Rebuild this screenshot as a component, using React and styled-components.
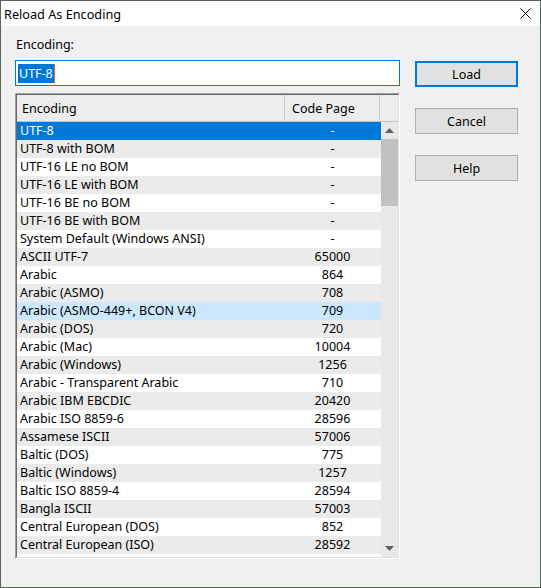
import React from 'react';
import styled, { createGlobalStyle } from 'styled-components';

const GlobalStyle = createGlobalStyle`
  html, body {
    margin: 0;
    padding: 0;
    background: #f0f0f0;
  }
  body {
    font-family: "Noto Sans", "Liberation Sans", sans-serif;
    font-size: 12.5px;
    color: #000;
  }
`;

const Window = styled.div`
  width: 541px;
  height: 588px;
  box-sizing: border-box;
  border: 1px solid #56645b;
  background: #f0f0f0;
  display: flex;
  flex-direction: column;
`;

const TitleBar = styled.div`
  height: 25px;
  background: #ffffff;
  display: flex;
  align-items: center;
  justify-content: space-between;
  padding-left: 3px;
  padding-right: 9px;
`;

const Title = styled.span`
  font-size: 12.7px;
`;

const Body = styled.div`
  display: flex;
  padding: 10px 0 0 14px;
`;

const LeftColumn = styled.div`
  width: 385px;
  display: flex;
  flex-direction: column;
`;

const RightColumn = styled.div`
  width: 103px;
  margin-left: 15px;
  padding-top: 25px;
  display: flex;
  flex-direction: column;
  gap: 21px;
`;

const Label = styled.div`
  line-height: 18px;
  padding-left: 1px;
`;

const TextBox = styled.div`
  margin-top: 6px;
  height: 26px;
  box-sizing: border-box;
  border: 1px solid #0078d7;
  background: #fff;
  display: flex;
  align-items: center;
  padding-left: 2px;
`;

const Selected = styled.span`
  background: #0078d7;
  color: #fff;
  line-height: 19px;
  padding: 0 1px;
`;

const Caret = styled.span`
  width: 1px;
  height: 19px;
  background: #f7630c;
`;

const Button = styled.div`
  height: 26px;
  box-sizing: border-box;
  background: #e1e1e1;
  border: ${p => (p.$default ? '2px solid #0078d7' : '1px solid #adadad')};
  display: flex;
  align-items: center;
  justify-content: center;
`;

const ListBox = styled.div`
  margin-top: 7px;
  height: 466px;
  box-sizing: border-box;
  border: 1px solid;
  border-color: #a0a0a0 #ffffff #ffffff #a0a0a0;
  display: flex;
`;

const ListInner = styled.div`
  flex: 1;
  border: 1px solid;
  border-color: #696969 #e3e3e3 #e3e3e3 #696969;
  background: #fff;
  display: flex;
  flex-direction: column;
  min-height: 0;
`;

const Header = styled.div`
  height: 26px;
  display: flex;
  background: #ececec;
  border-bottom: 1px solid #c4c4c4;
`;

const HeaderCell = styled.div`
  width: ${p => p.$width}px;
  box-sizing: border-box;
  border-right: ${p => (p.$last ? 'none' : '1px solid #c8c8c8')};
  padding-left: ${p => p.$pad}px;
  display: flex;
  align-items: center;
`;

const ListBody = styled.div`
  flex: 1;
  display: flex;
  min-height: 0;
`;

const Rows = styled.div`
  flex: 1;
  overflow: hidden;
`;

const Row = styled.div`
  display: flex;
  height: 18px;
  line-height: 18px;
  white-space: nowrap;
  background: ${p =>
    p.$selected ? '#0078d7' : p.$hover ? '#cce8ff' : p.$odd ? '#ebebeb' : '#ffffff'};
  color: ${p => (p.$selected ? '#fff' : '#000')};
`;

const NameCell = styled.div`
  width: 267px;
  padding-left: 3px;
  box-sizing: border-box;
  overflow: hidden;
`;

const CodeCell = styled.div`
  flex: 1;
  text-align: center;
`;

const ScrollBar = styled.div`
  width: 17px;
  background: #e8e8e8;
  display: flex;
  flex-direction: column;
`;

const ArrowBox = styled.div`
  height: 17px;
  display: flex;
  align-items: center;
  justify-content: center;
  margin-top: ${p => (p.$bottom ? 'auto' : '0')};
`;

const Thumb = styled.div`
  height: 67px;
  background: #c1c1c1;
`;

const encodings = [
  ['UTF-8', '-'],
  ['UTF-8 with BOM', '-'],
  ['UTF-16 LE no BOM', '-'],
  ['UTF-16 LE with BOM', '-'],
  ['UTF-16 BE no BOM', '-'],
  ['UTF-16 BE with BOM', '-'],
  ['System Default (Windows ANSI)', '-'],
  ['ASCII UTF-7', '65000'],
  ['Arabic', '864'],
  ['Arabic (ASMO)', '708'],
  ['Arabic (ASMO-449+, BCON V4)', '709'],
  ['Arabic (DOS)', '720'],
  ['Arabic (Mac)', '10004'],
  ['Arabic (Windows)', '1256'],
  ['Arabic - Transparent Arabic', '710'],
  ['Arabic IBM EBCDIC', '20420'],
  ['Arabic ISO 8859-6', '28596'],
  ['Assamese ISCII', '57006'],
  ['Baltic (DOS)', '775'],
  ['Baltic (Windows)', '1257'],
  ['Baltic ISO 8859-4', '28594'],
  ['Bangla ISCII', '57003'],
  ['Central European (DOS)', '852'],
  ['Central European (ISO)', '28592'],
];

const CloseIcon = () => (
  <svg width="11" height="11" viewBox="0 0 11 11">
    <path d="M0.5 0.5 L10.5 10.5 M10.5 0.5 L0.5 10.5" stroke="#000" strokeWidth="1" fill="none" />
  </svg>
);

const Arrow = ({ down }) => (
  <svg width="9" height="5" viewBox="0 0 9 5">
    <path d={down ? 'M0 0 H9 L4.5 5 Z' : 'M4.5 0 L9 5 H0 Z'} fill="#606060" />
  </svg>
);

const App = () => {
  return (
    <>
      <GlobalStyle />
      <Window>
        <TitleBar>
          <Title>Reload As Encoding</Title>
          <CloseIcon />
        </TitleBar>
        <Body>
          <LeftColumn>
            <Label>Encoding:</Label>
            <TextBox>
              <Selected>UTF-8</Selected>
              <Caret />
            </TextBox>
            <ListBox>
              <ListInner>
                <Header>
                  <HeaderCell $width={268} $pad={5}>Encoding</HeaderCell>
                  <HeaderCell $width={95} $pad={7}>Code Page</HeaderCell>
                  <HeaderCell $width={18} $last />
                </Header>
                <ListBody>
                  <Rows>
                    {encodings.map(([name, code], i) => (
                      <Row key={name} $odd={i % 2 === 1} $selected={i === 0} $hover={i === 10}>
                        <NameCell>{name}</NameCell>
                        <CodeCell>{code}</CodeCell>
                      </Row>
                    ))}
                  </Rows>
                  <ScrollBar>
                    <ArrowBox><Arrow /></ArrowBox>
                    <Thumb />
                    <ArrowBox $bottom><Arrow down /></ArrowBox>
                  </ScrollBar>
                </ListBody>
              </ListInner>
            </ListBox>
          </LeftColumn>
          <RightColumn>
            <Button $default>Load</Button>
            <Button>Cancel</Button>
            <Button>Help</Button>
          </RightColumn>
        </Body>
      </Window>
    </>
  );
};

export default App;
